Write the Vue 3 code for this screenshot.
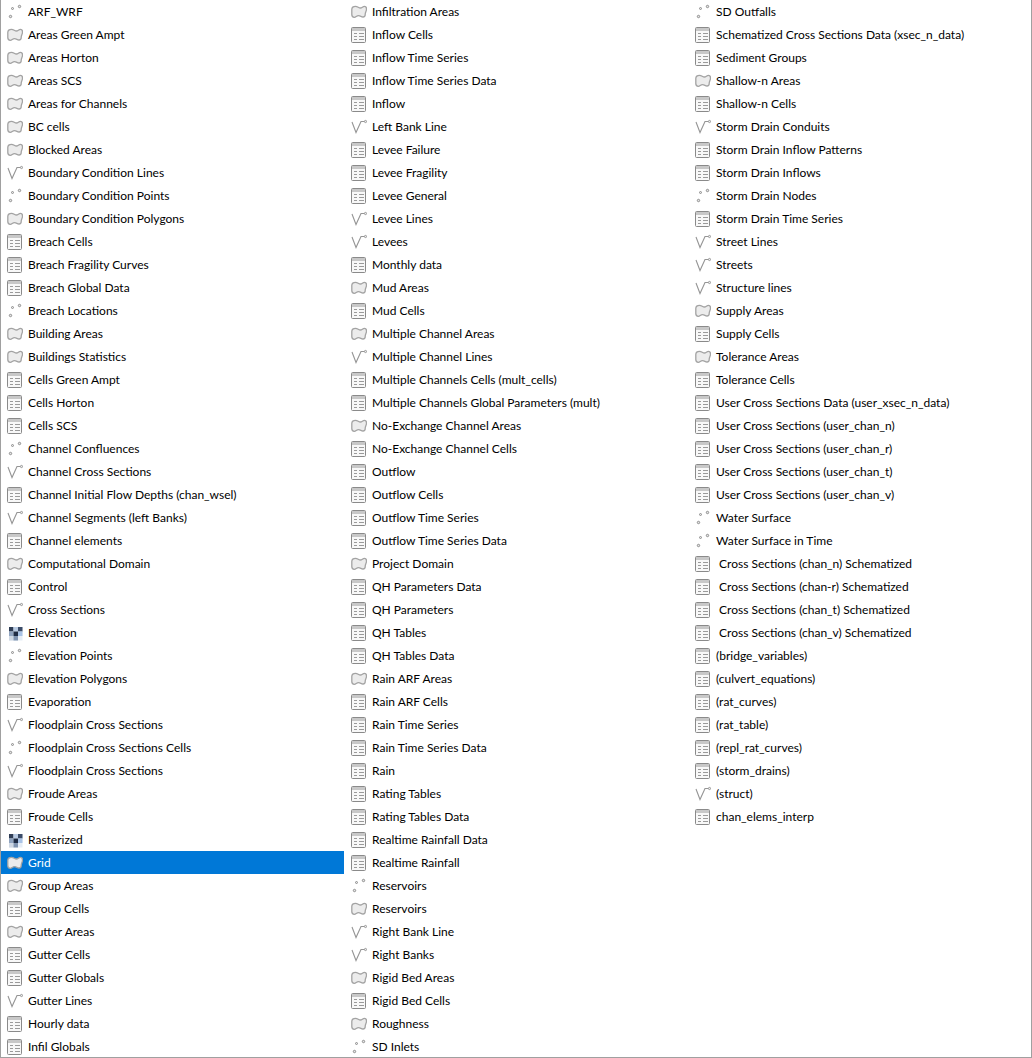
<template>
  <div class="layer-list">
    <div
      v-for="item in items"
      :key="item.id"
      class="layer-row"
      :class="{ selected: item.name === 'Grid' }"
    >
      <svg class="layer-icon" width="16" height="16" viewBox="0 0 16 16">
        <g v-if="item.kind === 'p'" fill="#e8e8e8" stroke="#8c8c8c" stroke-width="1">
          <circle cx="12.500" cy="2.500" r="1.200" />
          <circle cx="5.500" cy="4.500" r="1" />
          <circle cx="3.500" cy="12.500" r="1.200" />
        </g>
        <g v-else-if="item.kind === 'l'" fill="none" stroke="#959595" stroke-width="1.100">
          <path d="M1 3 L5 13.500 L10 2.500 L13.500 2.500" />
          <circle cx="14.500" cy="2.500" r="1.100" fill="#eee" stroke-width="1" />
        </g>
        <path
          v-else-if="item.kind === 'a'"
          d="M0.800 5.500 C0.800 3 2.200 2.300 4.500 2.300 C6.800 2.300 7.500 4 9.500 4 C11 4 11.800 2.300 13.500 2.300 C15 2.300 15.500 3.300 15.500 5 C15.500 7.500 14.200 8 14.200 10.500 C14.200 12.300 13.300 13 12 13 C10.200 13 9.500 11.600 7.500 11.600 C5.500 11.600 5 13.300 3.300 13.300 C1.800 13.300 0.800 12.300 0.800 10.500 Z"
          fill="#ececec"
          stroke="#a3a3a3"
          stroke-width="1.300"
        />
        <g v-else-if="item.kind === 't'">
          <rect x="0.500" y="0.500" width="14" height="15" rx="1" fill="#f8f8f8" stroke="#8a8a8a" />
          <rect x="1" y="1" width="13" height="3" fill="#c8c8c8" />
          <path d="M3 6.500 H6 M8 6.500 H13 M3 9.500 H6 M8 9.500 H13 M3 12.500 H6 M8 12.500 H13" stroke="#9a9a9a" />
        </g>
        <g v-else>
          <rect x="2" y="2" width="13.500" height="13.500" fill="#e6edf6" />
          <rect x="2" y="2" width="4.500" height="4.500" fill="#2f3d55" />
          <rect x="6.500" y="2" width="4.500" height="4.500" fill="#b9cbe3" />
          <rect x="11" y="2" width="4.500" height="4.500" fill="#3b4c69" />
          <rect x="2" y="6.500" width="4.500" height="4.500" fill="#8fa3bf" />
          <rect x="6.500" y="6.500" width="4.500" height="4.500" fill="#1f2c44" />
          <rect x="11" y="6.500" width="4.500" height="4.500" fill="#a9c3e6" />
          <rect x="2" y="11" width="4.500" height="4.500" fill="#cfd8e4" />
          <rect x="6.500" y="11" width="4.500" height="4.500" fill="#7f93b0" />
        </g>
      </svg>
      <span class="layer-name">{{ item.name }}</span>
    </div>
  </div>
</template>

<script setup>
const raw = `p|ARF_WRF
a|Areas Green Ampt
a|Areas Horton
a|Areas SCS
a|Areas for Channels
a|BC cells
a|Blocked Areas
l|Boundary Condition Lines
p|Boundary Condition Points
a|Boundary Condition Polygons
t|Breach Cells
t|Breach Fragility Curves
t|Breach Global Data
p|Breach Locations
a|Building Areas
a|Buildings Statistics
t|Cells Green Ampt
t|Cells Horton
t|Cells SCS
p|Channel Confluences
l|Channel Cross Sections
t|Channel Initial Flow Depths (chan_wsel)
l|Channel Segments (left Banks)
t|Channel elements
a|Computational Domain
t|Control
l|Cross Sections
r|Elevation
p|Elevation Points
a|Elevation Polygons
t|Evaporation
l|Floodplain Cross Sections
p|Floodplain Cross Sections Cells
l|Floodplain Cross Sections
a|Froude Areas
t|Froude Cells
r|Rasterized
a|Grid
a|Group Areas
t|Group Cells
a|Gutter Areas
t|Gutter Cells
t|Gutter Globals
l|Gutter Lines
t|Hourly data
t|Infil Globals
a|Infiltration Areas
t|Inflow Cells
t|Inflow Time Series
t|Inflow Time Series Data
t|Inflow
l|Left Bank Line
t|Levee Failure
t|Levee Fragility
t|Levee General
l|Levee Lines
l|Levees
t|Monthly data
a|Mud Areas
t|Mud Cells
a|Multiple Channel Areas
l|Multiple Channel Lines
t|Multiple Channels Cells (mult_cells)
t|Multiple Channels Global Parameters (mult)
a|No-Exchange Channel Areas
t|No-Exchange Channel Cells
t|Outflow
t|Outflow Cells
t|Outflow Time Series
t|Outflow Time Series Data
a|Project Domain
t|QH Parameters Data
t|QH Parameters
t|QH Tables
t|QH Tables Data
a|Rain ARF Areas
t|Rain ARF Cells
t|Rain Time Series
t|Rain Time Series Data
t|Rain
t|Rating Tables
t|Rating Tables Data
t|Realtime Rainfall Data
t|Realtime Rainfall
p|Reservoirs
a|Reservoirs
l|Right Bank Line
l|Right Banks
a|Rigid Bed Areas
t|Rigid Bed Cells
a|Roughness
p|SD Inlets
p|SD Outfalls
t|Schematized Cross Sections Data (xsec_n_data)
t|Sediment Groups
a|Shallow-n Areas
t|Shallow-n Cells
l|Storm Drain Conduits
t|Storm Drain Inflow Patterns
t|Storm Drain Inflows
p|Storm Drain Nodes
t|Storm Drain Time Series
l|Street Lines
l|Streets
l|Structure lines
a|Supply Areas
t|Supply Cells
a|Tolerance Areas
t|Tolerance Cells
t|User Cross Sections Data (user_xsec_n_data)
t|User Cross Sections (user_chan_n)
t|User Cross Sections (user_chan_r)
t|User Cross Sections (user_chan_t)
t|User Cross Sections (user_chan_v)
p|Water Surface
p|Water Surface in Time
t| Cross Sections (chan_n) Schematized
t| Cross Sections (chan-r) Schematized
t| Cross Sections (chan_t) Schematized
t| Cross Sections (chan_v) Schematized
t|(bridge_variables)
t|(culvert_equations)
t|(rat_curves)
t|(rat_table)
t|(repl_rat_curves)
t|(storm_drains)
l|(struct)
t|chan_elems_interp`

const items = raw.split('\n').map((line, id) => {
  const [kind, name] = line.split('|')
  return { id, kind, name }
})
</script>

<style scoped>
.layer-list {
  box-sizing: border-box;
  width: 1032px;
  height: 1058px;
  overflow: hidden;
  background: #fff;
  border: 1px solid #a0a0a0;
  border-width: 0 1px 1px 1px;
  display: grid;
  grid-auto-flow: column;
  grid-template-rows: repeat(46, 23px);
  grid-template-columns: repeat(3, 344px);
  font-family: Lato, sans-serif;
  font-size: 12px;
  color: #000;
}

.layer-row {
  display: flex;
  align-items: center;
  gap: 5px;
  padding-left: 6px;
  height: 23px;
  white-space: pre;
}

.layer-row.selected {
  background: #0078d7;
  color: #fff;
  margin-right: 1px;
}

.layer-icon {
  flex: none;
  align-self: flex-start;
  margin-top: 4px;
}
</style>

<style>
html, body {
  margin: 0;
  background: #fff;
}
</style>
